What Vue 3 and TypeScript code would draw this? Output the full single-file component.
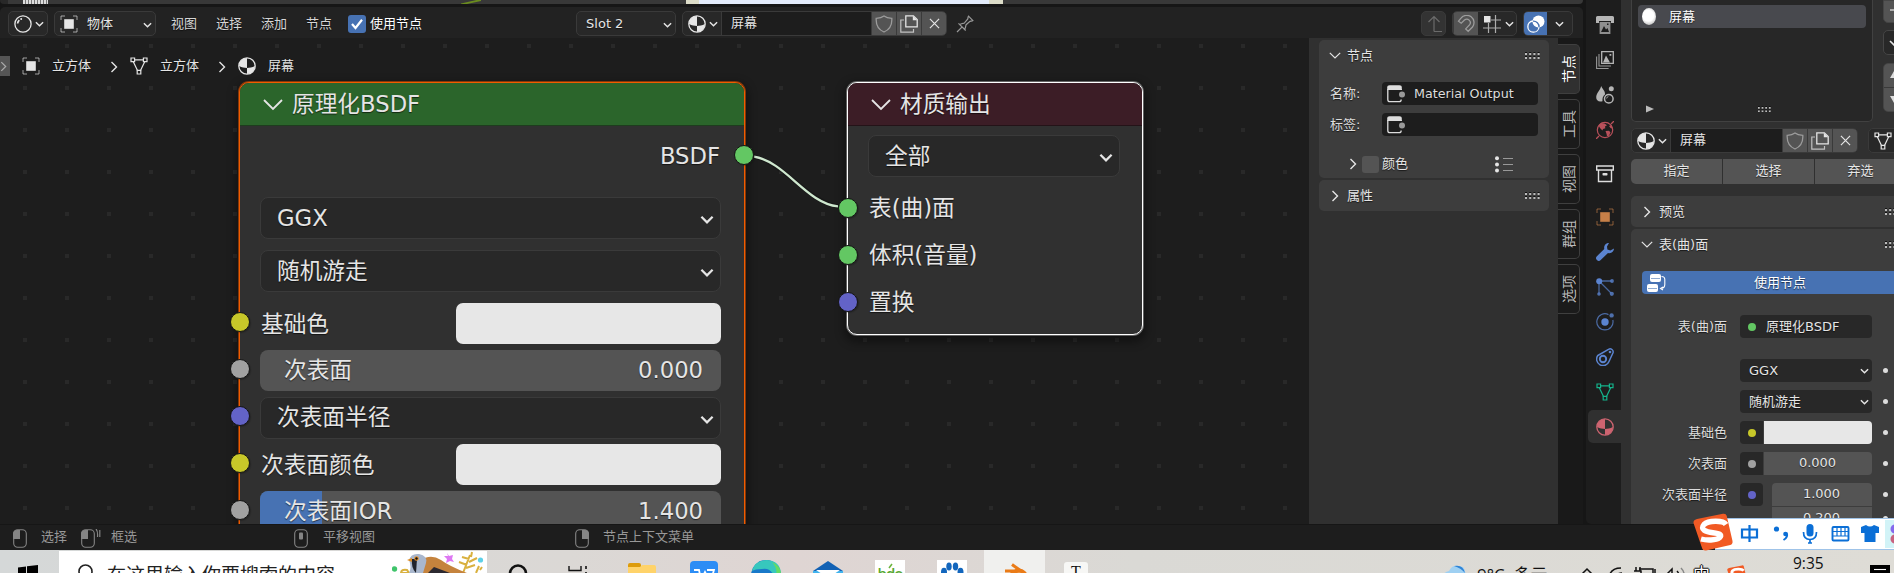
<script setup lang="ts">
interface Socket {
  kind: 'color' | 'value' | 'menu'
  label: string
  value?: string
  socket: string
  fill?: number
}

const menus: string[] = ['视图', '选择', '添加', '节点']
const sideTabs: string[] = ['节点', '工具', '视图', '群组', '选项']

const inputs: Socket[] = [
  { kind: 'color', label: '基础色', socket: 'yellow' },
  { kind: 'value', label: '次表面', value: '0.000', socket: 'gray', fill: 0 },
  { kind: 'menu', label: '次表面半径', socket: 'violet' },
  { kind: 'color', label: '次表面颜色', socket: 'yellow' },
  { kind: 'value', label: '次表面IOR', value: '1.400', socket: 'gray', fill: 13.5 },
]

const outputs = [
  { label: '表(曲)面', socket: 'green' },
  { label: '体积(音量)', socket: 'green' },
  { label: '置换', socket: 'violet' },
]

const navTop = [
  { icon: 'i-printer', tone: 'light' },
  { icon: 'i-images', tone: 'light' },
  { icon: 'i-scene', tone: 'light' },
  { icon: 'i-world', tone: 'red' },
]
const navBottom = [
  { icon: 'i-object', tone: 'orange' },
  { icon: 'i-wrench', tone: 'blue' },
  { icon: 'i-particles', tone: 'blue' },
  { icon: 'i-physics', tone: 'blue' },
  { icon: 'i-constraint', tone: 'blue' },
  { icon: 'i-mesh', tone: 'teal' },
]
</script>

<template>
  <div class="screen">
    <svg class="defs" width="0" height="0">
      <symbol id="i-chev" viewBox="0 0 10 6"><path d="M1 1l4 4 4-4" fill="none" stroke="currentColor" stroke-width="1.6" /></symbol>
      <symbol id="i-chevbig" viewBox="0 0 20 12"><path d="M1 1l9 9 9-9" fill="none" stroke="currentColor" stroke-width="1.8" /></symbol>
      <symbol id="i-right" viewBox="0 0 8 12"><path d="M1.5 1l5 5-5 5" fill="none" stroke="currentColor" stroke-width="1.4" /></symbol>
      <symbol id="i-object" viewBox="0 0 18 18">
        <path d="M1 5V1h4M13 1h4v4M17 13v4h-4M5 17H1v-4" fill="none" stroke="currentColor" stroke-width="1" opacity=".65" />
        <rect x="4.2" y="4.2" width="9.6" height="9.6" fill="currentColor" />
      </symbol>
      <symbol id="i-mesh" viewBox="0 0 18 18">
        <path d="M4.5 2.8h9M3.3 4.8l4.2 8.6M14.7 4.8l-4.2 8.6" fill="none" stroke="currentColor" stroke-width="1.2" />
        <path d="M1 1h3.6v3.6H1zM13.4 1H17v3.6h-3.6zM7.2 13.4h3.6V17H7.2z" fill="none" stroke="currentColor" stroke-width="1.2" />
      </symbol>
      <symbol id="i-material" viewBox="0 0 18 18">
        <circle cx="9" cy="9" r="8.2" fill="none" stroke="currentColor" stroke-width="1.3" />
        <path d="M9 1A8 8 0 0 0 1 9c3 1.4 5.4 1.9 8 1.9zM9 10.9V17a8 8 0 0 0 8-8c-3 1.4-5.4 1.9-8 1.9z" fill="currentColor" />
      </symbol>
      <symbol id="i-shader" viewBox="0 0 18 18">
        <circle cx="9" cy="9" r="8.1" fill="none" stroke="currentColor" stroke-width="1.3" />
        <path d="M3.6 8.5a5.4 5.4 0 0 1 1.7-3.4" fill="none" stroke="currentColor" stroke-width="1.8" />
        <circle cx="7.2" cy="3.9" r="1" fill="currentColor" />
      </symbol>
      <symbol id="i-shield" viewBox="0 0 18 18"><path d="M9 1c2 1.7 4.4 2.3 7.8 2.4C17.2 10 14.6 14.6 9 17 3.400 14.600.8 10 1.2 3.400 4.600 3.300 7 2.700 9 1z" fill="none" stroke="currentColor" stroke-width="1.3" /></symbol>
      <symbol id="i-copy" viewBox="0 0 18 18">
        <path d="M4 5H.8v12.200H13.500V14" fill="none" stroke="currentColor" stroke-width="1.2" opacity=".75" />
        <path d="M5.800.8h7.600l3.800 3.800v7.200H5.800z" fill="none" stroke="currentColor" stroke-width="1.3" />
        <path d="M12.800.8v4.400h4.400z" fill="currentColor" />
      </symbol>
      <symbol id="i-x" viewBox="0 0 12 12"><path d="M1 1l10 10M11 1L1 11" stroke="currentColor" stroke-width="1.3" /></symbol>
      <symbol id="i-pin" viewBox="0 0 18 18"><path d="M1 17l5.200-5.200M2.500 8.300l7.200 7.200M4.300 9.200c1.800-1 3.300-.8 4.200-1.300L11.800 4c.2-1.200.1-2 .7-2.800l4.400 4.400c-.9.600-1.700.5-2.900.8l-3.900 3.300c-.5.900-.2 2.500-1.300 4.200" fill="none" stroke="currentColor" stroke-width="1.2" /></symbol>
      <symbol id="i-magnet" viewBox="0 0 18 18"><path d="M1.500 6.200l2.500-3A7.200 7.200 0 0 1 15.500 12l-4.300 4.300-2.500-2.400 4-4.200a3.500 3.500 0 0 0-5.200-4.600L4.200 8.200z" fill="none" stroke="currentColor" stroke-width="1.3" /></symbol>
      <symbol id="i-grid" viewBox="0 0 18 18">
        <path d="M12.500 0v18M5.500 8v10M0 13h18M8 5h10" stroke="currentColor" stroke-width="1.2" opacity=".7" />
        <rect x="1" y="1" width="6.500" height="6.500" fill="currentColor" />
      </symbol>
      <symbol id="i-overlay" viewBox="0 0 18 18">
        <path d="M6 6A5.600 5.600 0 1 0 12 12.200" fill="none" stroke="currentColor" stroke-width="1.3" />
        <circle cx="11.500" cy="6.500" r="6" fill="currentColor" />
        <path d="M6 6.100a5.600 5.600 0 0 1 6 6" fill="none" stroke="#4772b3" stroke-width="1.4" />
      </symbol>
      <symbol id="i-node" viewBox="0 0 18 18">
        <path d="M.8 4v10.500c0 1.500.7 2.200 2.200 2.200h9c1.500 0 2.200-.7 2.200-2.200M14.200 4v1" fill="none" stroke="currentColor" stroke-width="1.3" />
        <path d="M.2 5V2.600C.2 1 1 .2 2.600.2h9.800c1.600 0 2.400.8 2.400 2.400V5z" fill="currentColor" />
        <circle cx="15" cy="9.500" r="3" fill="#9a9a9a" />
      </symbol>
      <symbol id="i-grip" viewBox="0 0 15 8">
        <g fill="currentColor"><path d="M0 1h2v2H0zM4.200 1h2v2h-2zM8.400 1h2v2h-2zM12.600 1h2v2h-2zM0 5h2v2H0zM4.200 5h2v2h-2zM8.400 5h2v2h-2zM12.600 5h2v2h-2z" /></g>
        <g fill="#111"><path d="M0 0h2v1H0zM4.200 0h2v1h-2zM8.400 0h2v1h-2zM12.600 0h2v1h-2zM0 4h2v1H0zM4.200 4h2v1h-2zM8.400 4h2v1h-2zM12.600 4h2v1h-2z" /></g>
      </symbol>
      <symbol id="i-printer" viewBox="0 0 18 18">
        <path d="M1.500 0h15A1.500 1.500 0 0 1 18 1.500V7h-3V5H3v2H0V1.500A1.500 1.500 0 0 1 1.500 0z" fill="currentColor" />
        <rect x="3.600" y="6" width="10.800" height="12" fill="currentColor" opacity=".75" />
        <path d="M5 16l3-6 2 3.500 1.500-1.500L13 16zM11 7.500h1.500V9H11z" fill="#1d1d1d" />
      </symbol>
      <symbol id="i-images" viewBox="0 0 18 18">
        <path d="M5.700.7h11.600v11.600H5.700z" fill="none" stroke="currentColor" stroke-width="1.3" />
        <path d="M3 3v12h12M.6 5.500v12h12" fill="none" stroke="currentColor" stroke-width="1.1" opacity=".8" />
        <path d="M7 11.500l3-7 4 7zM13.500 3h1.800v1.800h-1.800z" fill="currentColor" />
      </symbol>
      <symbol id="i-scene" viewBox="0 0 18 18">
        <path d="M5.200 0c1 3 4.200 5 3.800 8.500C7 10 6.200 12 6.500 15.200 3 16.500 0 14.500.2 11 .6 6.500 4.200 4.500 5.200 0z" fill="currentColor" />
        <circle cx="12.800" cy="12.800" r="4.300" fill="none" stroke="currentColor" stroke-width="1.500" />
        <path d="M10.600 12.500q.2-1.700 1.800-2" fill="none" stroke="currentColor" stroke-width=".8" />
        <circle cx="15.300" cy="2.800" r="2.500" fill="currentColor" />
      </symbol>
      <symbol id="i-world" viewBox="0 0 18 18">
        <circle cx="9" cy="9" r="7.700" fill="none" stroke="currentColor" stroke-width="1.2" />
        <path d="M2.500 4.500L5 2l3.500.5L11 4.200 9 5.500l.3 1.700L7 8l-.5 1.500L4 7zM9.500 10l3.500-.3 1.500 1.800-1.500 3.300-2 .5-.5-2.500zM13 5l2.500-1 1 3.500-2-.5z" fill="currentColor" />
        <path d="M0 18l3-3M15 3l3-3" stroke="currentColor" stroke-width="1.300" />
      </symbol>
      <symbol id="i-archive" viewBox="0 0 18 18">
        <path d="M.7 1h16.600v4H.7zM2.500 5v11.500h13V5" fill="none" stroke="currentColor" stroke-width="1.4" />
        <rect x="6.500" y="8" width="5" height="2.500" rx=".8" fill="currentColor" />
      </symbol>
      <symbol id="i-wrench" viewBox="0 0 18 18"><path d="M13 0c-3.200 0-5.500 2.800-4.700 6L.9 13.200A2.600 2.600 0 0 0 4.700 17L12 10c3.200.9 6-1.300 6-4.400l-3.600 2-3-1.200L11 3.600z" fill="currentColor" /></symbol>
      <symbol id="i-particles" viewBox="0 0 18 18">
        <path d="M3 3h12.500M3 3v12.500M4 4l11 11" stroke="currentColor" stroke-width="1.3" opacity=".7" />
        <circle cx="3.200" cy="3.200" r="3" fill="currentColor" />
        <g fill="currentColor" opacity=".8"><circle cx="16" cy="3" r="1.900" /><circle cx="3" cy="16" r="1.800" /><circle cx="15.800" cy="15.800" r="2.100" /></g>
      </symbol>
      <symbol id="i-physics" viewBox="0 0 18 18">
        <path d="M12.500 1.600A8.100 8.100 0 1 0 16.800 7" fill="none" stroke="currentColor" stroke-width="1.2" opacity=".75" />
        <circle cx="9" cy="9" r="3.700" fill="currentColor" /><circle cx="15.600" cy="2.400" r="2.200" fill="currentColor" opacity=".8" />
      </symbol>
      <symbol id="i-constraint" viewBox="0 0 18 18">
        <path d="M1.800 7.500L12.500 1.400A3 3 0 0 1 17 4.800L13 13.500A6.400 6.400 0 1 1 1.800 7.500z" fill="none" stroke="currentColor" stroke-width="1.500" />
        <circle cx="7" cy="11" r="3.200" fill="none" stroke="currentColor" stroke-width="1.900" />
        <circle cx="14" cy="4" r="1.300" fill="currentColor" />
      </symbol>
      <symbol id="i-mouse" viewBox="0 0 14 19"><rect x=".7" y=".7" width="12.600" height="17.600" rx="4" fill="none" stroke="currentColor" stroke-width="1.1" /></symbol>
      <symbol id="i-sogou" viewBox="0 0 40 38">
        <path d="M4 6L30 .8q3-.5 3.700 2L39.500 28q.5 3-2.200 4L13 37.500q-3 .5-3.800-2L.5 10Q0 7 4 6z" fill="#f15a24" />
        <path d="M33 11.500c-3-4.500-18-4-22 0-4.500 5 2 7.500 9 8.200 7 .8 9.500 2.300 6.500 5-3.500 2.800-13 2.800-18.500 1.300" fill="none" stroke="#fff" stroke-width="5.400" />
      </symbol>
    </svg>

    <div class="workspace">
      <main class="editor">
        <div class="strip">
          <span class="strip-icon"></span>
          <svg class="strip-curve" width="20" height="4"><path d="M0 4.500Q10 2 20 0" fill="none" stroke="#6b8c1f" stroke-width="1.800" /></svg>
          <span class="strip-light"></span>
        </div>
        <header class="header">
          <div class="btn type"><svg width="18" height="18"><use href="#i-shader" /></svg><svg width="9" height="6"><use href="#i-chev" /></svg></div>
          <div class="btn mode"><svg width="18" height="18"><use href="#i-object" /></svg><span>物体</span><svg class="end" width="9" height="6"><use href="#i-chev" /></svg></div>
          <nav class="menus"><span v-for="m in menus" :key="m">{{ m }}</span></nav>
          <label class="check"><span class="box"><svg width="18" height="18" viewBox="0 0 18 18"><path d="M4 9l3.500 4L14 4.800" fill="none" stroke="#fff" stroke-width="2.200" /></svg></span>使用节点</label>
          <div class="btn slot"><span>Slot 2</span><svg class="end" width="9" height="6"><use href="#i-chev" /></svg></div>
          <div class="btn datablock">
            <div class="pick"><svg width="18" height="18"><use href="#i-material" /></svg><svg width="9" height="6"><use href="#i-chev" /></svg></div>
            <div class="name">屏幕</div>
            <div class="tool dim"><svg width="18" height="18"><use href="#i-shield" /></svg></div>
            <div class="tool"><svg width="18" height="18"><use href="#i-copy" /></svg></div>
            <div class="tool"><svg width="11" height="11"><use href="#i-x" /></svg></div>
          </div>
          <svg class="pin" width="18" height="18"><use href="#i-pin" /></svg>
          <div class="btn up"><svg width="18" height="18" viewBox="0 0 18 18"><path d="M8 16.500V1.500M2.500 7L8 1.500 13.500 7M8 16.500h8" fill="none" stroke="currentColor" stroke-width="1.2" /></svg></div>
          <div class="btn snap"><div class="tool dim"><svg width="18" height="18"><use href="#i-magnet" /></svg></div><div class="rest"><svg width="18" height="18"><use href="#i-grid" /></svg><svg width="9" height="6"><use href="#i-chev" /></svg></div></div>
          <div class="btn overlay"><div class="on"><svg width="18" height="18"><use href="#i-overlay" /></svg></div><div class="rest"><svg width="9" height="6"><use href="#i-chev" /></svg></div></div>
        </header>

        <div class="area">
          <section class="canvas">
            <div class="crumbs">
              <span class="tab-handle"><svg width="7" height="11"><use href="#i-right" /></svg></span>
              <svg class="c1" width="18" height="18"><use href="#i-object" /></svg><span>立方体</span>
              <svg class="sep" width="8" height="12"><use href="#i-right" /></svg>
              <svg class="c2" width="18" height="18"><use href="#i-mesh" /></svg><span>立方体</span>
              <svg class="sep" width="8" height="12"><use href="#i-right" /></svg>
              <svg class="c2" width="18" height="18"><use href="#i-material" /></svg><span>屏幕</span>
            </div>

            <svg class="wire" width="130" height="80" viewBox="740 145 130 80">
              <path d="M744 155.500C784 155.500 806 207.500 848 207.500" fill="none" stroke="#111" stroke-width="4" opacity=".5" />
              <path d="M754 156.600C786 162 806 203 838 206.400" fill="none" stroke="#cfe8cf" stroke-width="2.300" />
            </svg>

            <article class="node bsdf">
              <h2><svg width="20" height="12"><use href="#i-chevbig" /></svg>原理化BSDF</h2>
              <div class="row out">BSDF<i class="socket green right"></i></div>
              <div class="field gap">GGX<svg width="14" height="9"><use href="#i-chev" /></svg></div>
              <div class="field gap2">随机游走<svg width="14" height="9"><use href="#i-chev" /></svg></div>
              <div v-for="s in inputs" :key="s.label" class="row">
                <i class="socket left" :class="s.socket"></i>
                <template v-if="s.kind === 'color'"><span class="lbl">{{ s.label }}</span><span class="swatch"></span></template>
                <div v-else-if="s.kind === 'menu'" class="field">{{ s.label }}<svg width="14" height="9"><use href="#i-chev" /></svg></div>
                <div v-else class="slider"><b :style="{ width: s.fill + '%' }"></b><span>{{ s.label }}</span><span>{{ s.value }}</span></div>
              </div>
            </article>

            <article class="node output">
              <h2><svg width="20" height="12"><use href="#i-chevbig" /></svg>材质输出</h2>
              <div class="field first">全部<svg width="14" height="9"><use href="#i-chev" /></svg></div>
              <div v-for="o in outputs" :key="o.label" class="row"><i class="socket left" :class="o.socket"></i><span class="lbl">{{ o.label }}</span></div>
            </article>
          </section>

          <aside class="sidebar">
            <section class="panel open">
              <div class="phead"><svg width="12" height="7" viewBox="0 0 12 7"><path d="M.8.8L6 6 11.200.8" fill="none" stroke="currentColor" stroke-width="1.2" /></svg><span>节点</span><svg class="grip" width="15" height="8"><use href="#i-grip" /></svg></div>
              <div class="prow n1"><span>名称:</span><div class="input"><svg width="18" height="18"><use href="#i-node" /></svg><em>Material Output</em></div></div>
              <div class="prow n2"><span>标签:</span><div class="input"><svg width="18" height="18"><use href="#i-node" /></svg></div></div>
              <div class="color-row">
                <svg width="8" height="12"><use href="#i-right" /></svg><i></i><span>颜色</span>
                <svg class="list" width="18" height="17" viewBox="0 0 18 17"><g fill="currentColor"><circle cx="2" cy="2.300" r="2" /><circle cx="2" cy="8.500" r="2" /><circle cx="2" cy="14.500" r="2" /></g><path d="M8 2.500h10M8 8.500h10M8 14.500h10" stroke="#999" stroke-width="1.1" /></svg>
              </div>
            </section>
            <section class="panel closed">
              <div class="phead"><svg class="rt" width="8" height="12"><use href="#i-right" /></svg><span>属性</span><svg class="grip" width="15" height="8"><use href="#i-grip" /></svg></div>
            </section>
          </aside>
          <div class="tabs"><div v-for="(t, i) in sideTabs" :key="t" class="tab" :class="{ active: i === 0 }"><span>{{ t }}</span></div></div>
        </div>
      </main>

      <nav class="nav">
        <div v-for="n in navTop" :key="n.icon" class="cell" :class="n.tone"><svg width="18" height="18"><use :href="'#' + n.icon" /></svg></div>
        <div class="cell arch"><svg width="18" height="18"><use href="#i-archive" /></svg></div>
        <div v-for="n in navBottom" :key="n.icon" class="cell" :class="n.tone"><svg width="18" height="18"><use :href="'#' + n.icon" /></svg></div>
        <div class="cell pink current"><svg width="18" height="18"><use href="#i-material" /></svg></div>
      </nav>

      <aside class="props">
        <div class="slots">
          <div class="slotlist">
            <div class="slotitem"><i class="ball"></i>屏幕</div>
            <div class="slotfoot"><svg width="8" height="8" viewBox="0 0 8 8"><path d="M0 .5l8 3.500-8 3.500z" fill="#bbb" /></svg><svg class="grip" width="13" height="7"><use href="#i-grip" /></svg></div>
          </div>
          <div class="slotbtns">
            <div class="sb plus"><svg width="11" height="12" viewBox="0 0 11 12"><path d="M0 4h11" stroke="#ddd" stroke-width="1.3" /></svg></div>
            <div class="sb menu"><svg width="10" height="6"><use href="#i-chev" /></svg></div>
            <div class="sb arrows"><svg width="8" height="34" viewBox="0 0 8 34"><path d="M0 7l4-7 4 7zM0 25l4 7 4-7z" fill="#ddd" /></svg></div>
          </div>
        </div>
        <div class="matrow">
          <div class="btn datablock">
            <div class="pick"><svg width="18" height="18"><use href="#i-material" /></svg><svg width="9" height="6"><use href="#i-chev" /></svg></div>
            <div class="name">屏幕</div>
            <div class="tool dim"><svg width="18" height="18"><use href="#i-shield" /></svg></div>
            <div class="tool"><svg width="18" height="18"><use href="#i-copy" /></svg></div>
            <div class="tool"><svg width="11" height="11"><use href="#i-x" /></svg></div>
          </div>
          <div class="btn link"><svg width="18" height="18"><use href="#i-mesh" /></svg></div>
        </div>
        <div class="assign"><span>指定</span><span>选择</span><span>弃选</span></div>
        <section class="ppanel small"><div class="phead"><svg class="rt" width="8" height="12"><use href="#i-right" /></svg><span>预览</span><svg class="grip" width="15" height="8"><use href="#i-grip" /></svg></div></section>
        <section class="ppanel big">
          <div class="phead"><svg width="12" height="7" viewBox="0 0 12 7"><path d="M.8.8L6 6 11.200.8" fill="none" stroke="currentColor" stroke-width="1.2" /></svg><span>表(曲)面</span><svg class="grip" width="15" height="8"><use href="#i-grip" /></svg></div>
          <div class="usenodes">
            <svg width="19" height="18" viewBox="0 0 19 18"><rect x="3" y="0" width="11" height="8" rx="2" fill="#fff" /><rect x="0" y="10" width="11" height="8" rx="2" fill="#fff" /><path d="M4 4.500h9M1 14.500h9" stroke="#4772b3" stroke-width="1" opacity=".6" /><path d="M14.500 2.500c3 0 3.300 1.500 3.300 3v5c0 2.500-1 4-4.500 4M16 13l-2.500 1.500L16 16" fill="none" stroke="#fff" stroke-width="1.1" /></svg>
            <span>使用节点</span>
          </div>
          <div class="line l1"><label>表(曲)面</label><div class="dark wide"><i class="dot green"></i>原理化BSDF</div></div>
          <div class="line l2"><label></label><div class="dark wide drop">GGX<svg width="9" height="6"><use href="#i-chev" /></svg></div><u></u></div>
          <div class="line"><label></label><div class="dark wide drop">随机游走<svg width="9" height="6"><use href="#i-chev" /></svg></div><u></u></div>
          <div class="line"><label>基础色</label><div class="dark cap"><i class="dot yellow"></i></div><div class="val white"></div><u></u></div>
          <div class="line"><label>次表面</label><div class="dark cap"><i class="dot gray"></i></div><div class="val">0.000</div><u></u></div>
          <div class="line"><label>次表面半径</label><div class="dark sq"><i class="dot violet"></i></div><div class="val multi">1.000</div><u></u></div>
          <div class="line last"><label></label><div class="dark sq hid"></div><div class="val multi mid">0.200</div><u></u></div>
        </section>
      </aside>
    </div>

    <footer class="status">
      <div class="hint h1"><svg width="14" height="19"><use href="#i-mouse" /><path d="M0 10V5q0-4 4-4h3v9z" fill="currentColor" /></svg><span>选择</span></div>
      <div class="hint h2"><svg width="20" height="19" viewBox="0 0 20 19"><use href="#i-mouse" width="14" height="19" /><path d="M0 10V5q0-4 4-4h3v9z" fill="currentColor" /><path d="M15 0q2 2 1.500 8M18.800 1v7" fill="none" stroke="currentColor" stroke-width="1.2" /></svg><span>框选</span></div>
      <div class="hint h3"><svg width="14" height="19"><use href="#i-mouse" /><rect x="5" y="3.500" width="4" height="7" rx="1" fill="currentColor" /></svg><span>平移视图</span></div>
      <div class="hint h4"><svg width="14" height="19"><use href="#i-mouse" /><path d="M14 10V5q0-4-4-4H7v9z" fill="currentColor" /></svg><span>节点上下文菜单</span></div>
    </footer>

    <footer class="taskbar">
      <svg class="win" width="20" height="20" viewBox="0 0 20 20"><path d="M0 2.600L8 1.400V20H0zM9 1.300L20 0v20H9z" fill="#000" /></svg>
      <div class="search">
        <svg class="lens" width="16" height="18" viewBox="0 0 16 18"><circle cx="7.500" cy="7.500" r="6.500" fill="none" stroke="#222" stroke-width="1.6" /></svg>
        <span>在这里输入你要搜索的内容</span>
        <svg class="bird" width="94" height="22" viewBox="0 0 94 22">
          <circle cx="2.500" cy="18" r="2.700" fill="#3fc46b" />
          <path d="M9 22q0-4 6-3l2 3zM71 22l7-18M77 8l-7-2M79 6l1-5M77 11l8-4M75 14l-8-3M74 17l9-3M84 22l3-7M88 19l2-3" stroke="#d9b13f" stroke-width="2" fill="none" />
          <path d="M28 10Q38 2 49 9q8 6 26 13H22q-2-8 6-12z" fill="#c5833d" />
          <path d="M17 9q2-7 10-6 9 2 7 9l-3 10H17q3-6 0-13z" fill="#a9b7cd" />
          <path d="M36 22l6-6 16 6z" fill="#2c2930" /><path d="M20 8h5l-1 14q-5-5-4-14z" fill="#20232c" /><path d="M20 7l-5 2 5 2z" fill="#dc8b24" /><circle cx="24.500" cy="7.500" r="2.300" fill="#e89129" /><circle cx="24.500" cy="7.500" r="1.200" fill="#111" />
          <path d="M55 2l2 3 4-1-1 4 2 3-4-1-4 2 1-4-3-3 4 0z" fill="#dd77f2" /><circle cx="88.500" cy="9" r="2.600" fill="#5dd0e8" />
        </svg>
      </div>
      <div class="app cortana"><svg width="20" height="22" viewBox="0 0 20 22"><circle cx="10" cy="10.500" r="8" fill="none" stroke="#111" stroke-width="2.600" /></svg></div>
      <div class="app view"><svg width="20" height="22" viewBox="0 0 20 22"><path d="M1 3v4.500h12V3M1 22v-9h12v9" fill="none" stroke="#111" stroke-width="1.4" /><path d="M18 3v3M18 9v11" stroke="#111" stroke-width="1.6" /></svg></div>
      <div class="app folder"><svg width="28" height="22" viewBox="0 0 28 22"><path d="M0 2q0-2 2-2h9q2 0 2 2v6H0z" fill="#dd9c0c" /><path d="M0 4h12l2-2h12q2 0 2 2v18H0z" fill="#ffd36a" /></svg></div>
      <div class="app wps"><svg width="28" height="24" viewBox="0 0 28 24"><rect width="28" height="28" rx="4" fill="#2c8df5" /><path d="M4 9h5l2 10 4-8 4 8 2-6h-4M17 9h7l-3 10" fill="none" stroke="#fff" stroke-width="1.800" /></svg></div>
      <div class="app edge"><svg width="30" height="24" viewBox="0 0 30 24"><circle cx="15" cy="15" r="15" fill="#1979c9" /><path d="M1 11Q4 0 16 0q14 1 14 15l-6 3q-4-11-13-9-7 0-10 2z" fill="#37c7bd" /><path d="M21 2q9 4 9 13l-5 3q2-10-4-16z" fill="#65dc63" /><path d="M12 22q0-9 8-8 4 3 3 8z" fill="#e7f6ff" /></svg></div>
      <div class="app mail"><svg width="30" height="24" viewBox="0 0 30 24"><path d="M0 11L15 1l15 10z" fill="#1261b4" /><path d="M0 11h30v13H0z" fill="#40b3ee" /><path d="M3 10h24l-12 8z" fill="#fff" /></svg></div>
      <div class="app bdo"><span>bdo</span><svg width="30" height="6" viewBox="0 0 30 6"><path d="M14 5l3-4" stroke="#6ab43e" stroke-width="1.500" /></svg></div>
      <div class="app paw"><svg width="30" height="24" viewBox="0 0 30 24"><path fill="#fff" d="M0 0h30v24H0z" /><g fill="#1266bd"><ellipse cx="7" cy="12" rx="3" ry="4.300" /><ellipse cx="12" cy="6.500" rx="2.700" ry="4" /><ellipse cx="18.500" cy="6.500" rx="2.700" ry="4" /><ellipse cx="23.500" cy="12" rx="3" ry="4.300" /><path d="M9 24q2-9 6.500-9T22 24z" /></g></svg></div>
      <div class="app blender"><svg width="25" height="22" viewBox="0 0 25 22"><path d="M9 1.500l14 10M2 8h15M1 16L14 7" stroke="#ea7b17" stroke-width="3" /><circle cx="16" cy="14.500" r="7" fill="none" stroke="#ea7b17" stroke-width="4" /></svg></div>
      <div class="app typora"><span>T</span></div>
      <div class="tray">
        <svg class="cloud" width="24" height="18" viewBox="0 0 24 18"><path d="M1 12Q0 7 6 6 9 0 15 1q7 0 7 6 2 2 2 7v4H1z" fill="#9fd0f2" /><path d="M11 1q9-2 11 7-4-5-11-7z" fill="#2e83d6" /><path d="M2 18Q1 8 9 8q7 0 8 10z" fill="#e9f5fd" /></svg>
        <span class="temp">9°C&nbsp; 多云</span>
        <svg class="ticons" width="120" height="20" viewBox="0 0 120 20">
          <g fill="none" stroke="#111" stroke-width="1.500">
            <path d="M0 15l6-6 6 6" /><path d="M28 18q1-10 12-10M34 19q1-6 7-6" /><path d="M58 9h14v10M55 7v4M59 7v4M53 11h7v6M74 9v9" /><path d="M82 14h4l5-5v10M96 11q3 3 1 8" /><path d="M100 8q5 5 2 11" stroke="#888" />
          </g>
        </svg>
        <span class="ime">中</span>
        <svg class="s2" width="20" height="19"><use href="#i-sogou" /></svg>
        <span class="clock">9:35</span>
        <svg class="notif" width="20" height="10" viewBox="0 0 20 10"><path d="M0 0h20v10H0z" /><path d="M4 4.500h12" stroke="#fff" stroke-width="1.1" /></svg>
      </div>
    </footer>

    <div class="imebar">
      <svg class="logo" width="40" height="38"><use href="#i-sogou" /></svg>
      <svg width="160" height="30" viewBox="0 0 160 30">
        <g fill="none" stroke="#0b6fd6" stroke-width="2.200"><path d="M3 10.500h15v8H3zM10.500 6v17" /></g>
        <circle cx="37.500" cy="10" r="2.600" fill="#0b6fd6" /><circle cx="46.500" cy="15" r="2.300" fill="#0b6fd6" /><path d="M47.500 14q2 4-3 7" fill="none" stroke="#0b6fd6" stroke-width="2" />
        <rect x="67.500" y="5" width="7" height="12.500" rx="3.500" fill="#0b6fd6" /><path d="M64.500 13q0 7.500 6.500 7.500t6.500-7.500M71 20v4M69 24h4" fill="none" stroke="#0b6fd6" stroke-width="1.700" />
        <rect x="93.500" y="8" width="16" height="13.500" rx="1" fill="none" stroke="#0b6fd6" stroke-width="1.900" /><path d="M94 12.500h15M94 17h15M98 8v9M102 8v9M106 8v9" stroke="#0b6fd6" stroke-width="1.2" />
        <path d="M122 8l5-2q4 3 8 0l5 2v6h-3.500v9h-11v-9H122z" fill="#0b6fd6" />
        <path d="M146 1h14v28h-14z" fill="#d2f3f7" /><circle cx="156" cy="10" r="4.500" fill="#8468ec" /><circle cx="156" cy="20" r="4.500" fill="#c8627f" />
      </svg>
    </div>
  </div>
</template>

<style>
body { margin: 0; overflow: hidden; }
</style>

<style scoped>
.screen { position: relative; width: 1894px; height: 573px; overflow: hidden; background: #161616; color: #e5e5e5; font: 13px/16px "DejaVu Sans", "Noto Sans CJK SC", sans-serif; white-space: nowrap; }
.screen * { box-sizing: border-box; }
.defs { position: absolute; }
svg { display: block; flex: none; }
i, em { font-style: normal; }
u { text-decoration: none; }
.workspace { display: flex; height: 525px; }
.editor { width: 1583px; display: flex; flex-direction: column; text-shadow: 0 1px 1px #0009; }

.strip { height: 4px; margin-bottom: 3px; display: flex; background: #383838; border-radius: 0 0 5px 5px; border-left: 8px solid #282828; }
.strip-icon { width: 25px; height: 4px; margin-left: 15px; background: repeating-linear-gradient(90deg, #ddd 0 2px, #777 2px 3px); }
.strip-curve { margin-left: 413px; }
.strip-light { width: 317px; margin-left: 205px; background: #e3ecfb; border: solid #dcdcc8; border-width: 0 14px 0 13px; }

.header { height: 31px; background: #222; border-radius: 5px 5px 0 0; display: flex; align-items: center; padding: 2px 0 0 8px; }
.btn { flex: none; height: 25px; border: 1px solid #3a3a3a; border-radius: 5px; background: #282828; display: flex; align-items: center; }
.type { width: 40px; padding-left: 5px; gap: 3px; }
.mode { width: 102px; margin-left: 6px; padding: 0 3px 0 5px; gap: 9px; }
.end { margin-left: auto; margin-top: 2px; }
.menus { display: flex; gap: 19px; margin-left: 15px; color: #d5d5d5; }
.check { display: flex; flex: none; align-items: center; margin-left: 16px; gap: 4px; width: 228px; color: #fff; }
.box { width: 18px; height: 18px; background: #4772b3; border-radius: 3px; }
.slot { width: 100px; padding: 0 3px 0 9px; }
.datablock { width: 265px; margin-left: 6px; overflow: hidden; }
.pick { width: 38px; height: 100%; display: flex; align-items: center; gap: 3px; padding-left: 5px; }
.name { flex: 1; height: 100%; background: #1d1d1d; border-left: 1px solid #3a3a3a; padding: 3px 9px; }
.tool { width: 25px; height: 100%; background: #545454; border-left: 1px solid #3a3a3a; display: flex; align-items: center; justify-content: center; }
.dim { color: #9c9c9c; }
.pin { margin-left: 9px; color: #999; }
.up { width: 25px; margin-left: 447px; padding-left: 4px; background: #333; color: #6b6b6b; }
.snap { width: 65px; margin-left: 6px; overflow: hidden; }
.overlay { width: 50px; margin-left: 6px; overflow: hidden; }
.rest { display: flex; align-items: center; padding-left: 5px; gap: 4px; }
.overlay .rest { padding-left: 8px; }
.on { width: 23px; height: 100%; background: #4772b3; color: #fff; display: flex; align-items: center; justify-content: center; }

.area { flex: 1; display: flex; height: 486px; max-height: 486px; }
.canvas { position: relative; width: 1309px; overflow: hidden; background: #1d1d1d; }
.canvas::before { content: ""; position: absolute; inset: 6px 0 0 23px; background-image: conic-gradient(from 0deg at 4px 4px, #0000 0 270deg, #292929 270deg 360deg); background-size: 42px 42px; }
.crumbs { position: relative; display: flex; align-items: center; height: 20px; margin-top: 18px; }
.tab-handle { width: 10px; height: 20px; background: #555; display: flex; align-items: center; color: #aaa; }
.c1 { margin: 0 12px 0 12px; }
.sep { margin: 2px 12px 0 19px; }
.c2 { margin: 0 12px 0 0; }
.wire { position: absolute; left: 740px; top: 107px; }
.node { position: absolute; top: 44px; border-radius: 10px; background: #303030; border: 1px solid; font-size: 22.7px; line-height: 30px; }
.bsdf { left: 239px; width: 506px; height: 520px; border-color: #f05c00; box-shadow: 0 0 0 1px #d04f0099, 0 4px 10px 3px #0006; padding: 0 23px 0 20px; }
.output { left: 847px; width: 296px; height: 253px; border-color: #fff; box-shadow: 0 0 0 1px #ffffff55, 0 4px 10px 3px #0006; padding: 0 22px 0 20px; }
h2 { margin: 0 -23px 0 -20px; height: 43px; padding-left: 23px; display: flex; align-items: center; gap: 9px; font-size: inherit; font-weight: normal; border-radius: 9px 9px 0 0; }
h2 svg { margin-top: 1px; }
.bsdf h2 { background: #2b652b; border-bottom: 1px solid #1e3d1e; }
.output h2 { background: #3c1d26; border-bottom: 1px solid #241318; margin-right: -22px; }
.row { position: relative; height: 47px; display: flex; align-items: center; }
.out { margin-top: 6px; justify-content: flex-end; padding-right: 1px; }
.field { width: 100%; height: 42px; border: 1px solid #3a3a3a; border-radius: 8px; background: #282828; display: flex; align-items: center; justify-content: space-between; padding: 0 6px 1px 16px; }
.field svg { margin-top: 4px; }
.gap { margin-top: 18px; }
.gap2 { margin: 11px 0 8px; }
.first { margin: 9px 0 7px; }
.lbl { flex: 1; padding-left: 1px; }
.swatch { width: 265px; height: 41px; background: #e7e7e7; border-radius: 7px; }
.slider { position: relative; width: 100%; height: 41px; border-radius: 8px; background: #545454; overflow: hidden; display: flex; align-items: center; justify-content: space-between; padding: 0 18px 1px 24px; }
.slider span { position: relative; }
.slider b { position: absolute; inset: 0 auto 0 0; background: #4772b3; }
.socket { position: absolute; top: 12px; width: 20px; height: 20px; border-radius: 50%; border: 1px solid #151515; box-shadow: 1px 1px 1px #1115; }
.left { left: -30px; }
.output .left { top: 14px; }
.right { top: 13px; right: -33px; }
.green { background: #63c763; }
.yellow { background: #c7c729; }
.gray { background: #a1a1a1; }
.violet { background: #6363c7; }

.sidebar { width: 249px; background: #303030; padding: 2px 9px 0 10px; }
.panel { background: #3d3d3d; border-radius: 5px; }
.open { height: 138px; }
.closed { height: 31px; margin-top: 2px; }
.phead { height: 31px; display: flex; align-items: center; padding: 0 9px 0 10px; }
.phead span { margin-left: 6px; }
.phead .rt { margin: 0 2px; }
.grip { margin-left: auto; color: #bbb; }
.prow { display: flex; align-items: center; height: 23px; padding: 0 11px; color: #ddd; }
.prow span { width: 52px; }
.n1 { margin-top: 11px; }
.n2 { margin-top: 8px; }
.input { width: 156px; height: 23px; background: #1d1d1d; border-radius: 4px; display: flex; align-items: center; padding-left: 5px; gap: 9px; font-size: 12.7px; }
.color-row { display: flex; align-items: center; height: 20px; margin-top: 18px; padding-left: 30px; }
.color-row i { width: 17px; height: 17px; background: #545454; border-radius: 3px; margin: 1px 3px 0 5px; }
.list { margin-left: 87px; }
.tabs { width: 25px; background: #191919; padding-top: 6px; display: flex; flex-direction: column; gap: 5px; }
.tab { width: 22px; height: 50px; border: 1px solid #3f3f3f; border-left: 0; border-radius: 0 5px 5px 0; background: #1b1b1b; display: flex; align-items: center; justify-content: center; color: #bbb; }
.tab span { writing-mode: vertical-rl; text-orientation: sideways; transform: rotate(180deg); font-size: 14px; line-height: 16px; }
.active { background: #303030; color: #fff; }

.nav { width: 35px; margin-left: 3px; background: #1d1d1d; border-radius: 0 0 0 5px; padding-top: 7px; height: 524px; }
.cell { height: 35px; display: flex; align-items: center; padding-left: 10px; }
.light { color: #b5b5b5; }
.red { color: #b8505a; }
.arch { margin: 9px 0 8px; color: #ddd; }
.orange { color: #c57f48; }
.blue { color: #5b84d0; }
.teal { color: #15b48c; }
.pink { color: #cd6470; }
.current { background: #303030; border-radius: 5px 0 0 5px; margin-left: 2px; padding-left: 8px; height: 33px; margin-top: 1px; }

.props { width: 273px; height: 524px; background: #303030; padding-left: 10px; overflow: hidden; text-shadow: 0 1px 1px #0009; }
.slots { display: flex; height: 122px; }
.slotlist { flex: none; width: 242px; height: 122px; background: #272727; border: 1px solid #414141; border-top: 0; border-radius: 0 0 5px 5px; padding: 5px 6px 0; }
.slotitem { height: 23px; border-radius: 4px; background: #48494e; display: flex; align-items: center; gap: 13px; padding-left: 4px; color: #fff; }
.ball { width: 14px; height: 17px; border-radius: 50%; background: radial-gradient(circle at 45% 45%, #fff 45%, #999); }
.slotfoot { display: flex; margin-top: 77px; padding-left: 8px; align-items: center; }
.slotfoot .grip { margin-left: 104px; }
.slotbtns { flex: none; margin-left: 10px; }
.sb { width: 30px; display: flex; justify-content: flex-start; padding-left: 6px; align-items: center; border-radius: 5px; border: 1px solid #454545; background: #545454; }
.plus { height: 23px; border-top-left-radius: 0; }
.menu { height: 25px; margin-top: 7px; background: #282828; padding-left: 5px; }
.arrows { height: 49px; margin-top: 8px; padding-left: 6px; background: linear-gradient(#545454 23px, #3a3a3a 23px 24px, #545454 24px); }
.matrow { display: flex; margin-top: 6px; }
.matrow .datablock { width: 227px; margin: 0; }
.link { margin-left: 10px; width: 40px; padding-left: 5px; }
.assign { display: flex; gap: 1px; margin-top: 6px; height: 25px; }
.assign span { width: 91px; background: #545454; text-align: center; padding-top: 4px; flex: none; }
.assign span:first-child { border-radius: 5px 0 0 5px; }
.ppanel { background: #3d3d3d; border-radius: 5px 0 0 5px; width: 280px; }
.small { height: 31px; margin-top: 12px; }
.big { height: 300px; margin-top: 2px; }
.ppanel .grip { margin-right: 2px; }
.usenodes { height: 23px; margin: 11px 0 0 11px; border-radius: 4px; background: #4772b3; display: flex; align-items: center; padding-left: 5px; color: #fff; }
.usenodes span { margin-left: 88px; }
.line { display: flex; height: 23px; margin-top: 8px; align-items: center; }
.l1, .l2 { margin-top: 21px; }
.line label { width: 96px; margin-right: 13px; text-align: right; color: #ddd; }
.dark { height: 23px; background: #282828; display: flex; align-items: center; border-radius: 4px; }
.wide { width: 132px; padding-left: 8px; gap: 10px; }
.drop { justify-content: space-between; padding: 0 3px 0 9px; }
.cap { width: 23px; border-radius: 4px 0 0 4px; margin-right: 1px; justify-content: center; }
.sq { width: 23px; margin-right: 9px; justify-content: center; }
.hid { visibility: hidden; }
.dot { width: 8px; height: 8px; border-radius: 50%; }
.val { width: 108px; height: 23px; background: #545454; border-radius: 0 4px 4px 0; text-align: center; line-height: 22px; padding-right: 1px; }
.white { background: #e7e7e7; }
.multi { width: 100px; border-radius: 4px 4px 0 0; }
.mid { border-radius: 0; }
.last { margin-top: 1px; }
.line u { width: 5px; height: 5px; border-radius: 50%; background: #ddd; margin-left: 11px; }

.status { height: 25px; background: #1d1d1d; display: flex; align-items: center; color: #989898; }
.hint { display: flex; align-items: center; gap: 14px; }
.hint span { margin-top: -1px; }
.hint svg { margin-top: 2px; color: #858585; }
.h1 { margin-left: 13px; }
.h2 { margin-left: 14px; gap: 10px; }
.h3 { margin-left: 157px; gap: 15px; }
.h4 { margin-left: 200px; }

.taskbar { height: 23px; overflow: hidden; background: linear-gradient(90deg, #d5d8d8, #dbd8d5 30%, #dfd5d3 42%, #dad9d5 60%, #dedcd6); color: #111; display: flex; align-items: flex-start; font-family: "Open Sans", "Noto Sans CJK SC", sans-serif; }
.win { margin: 15px 21px 0 18px; }
.search { flex: none; width: 428px; height: 30px; margin-top: 1px; background: #fff; display: flex; }
.lens { margin: 13px 0 0 19px; }
.search span { margin: 12px 0 0 13px; font-size: 19px; line-height: 24px; color: #222; width: 228px; }
.bird { margin-left: 57px; }
.app { flex: none; }
.cortana { margin: 5px 0 0 21px; }
.view { margin: 3px 0 0 40px; }
.folder { margin: 3px 0 0 40px; }
.wps { margin: 1px 0 0 34px; }
.edge { margin: 0 0 0 33px; }
.mail { margin: 0 0 0 32px; }
.bdo { position: relative; width: 30px; height: 24px; margin-left: 32px; background: #fff; color: #58a832; font: 600 15px/26px "Open Sans", sans-serif; text-align: center; letter-spacing: -1px; }
.bdo svg { position: absolute; left: 0; top: 3px; }
.paw { margin-left: 32px; }
.folder, .wps, .edge, .mail, .bdo, .paw { margin-top: 10px; }
.folder { margin-top: 13px; }
.wps { margin-top: 11px; }
.cortana, .view { margin-top: 5px; }
.cortana svg, .view svg { margin-top: 8px; }
.blender { width: 61px; height: 23px; margin-left: 17px; padding: 13px 0 0 19px; background: #f0f0ee; }
.typora { width: 24px; height: 24px; margin: 12px 0 0 19px; border-radius: 3px; background: #f7f7f5; font: 16px/20px "Liberation Serif", serif; text-align: center; }
.tray { display: flex; align-items: flex-start; margin-left: 355px; }
.cloud { margin-top: 15px; }
.temp { margin: 13px 0 0 10px; font-size: 17px; line-height: 24px; width: 76px; }
.ticons { margin: 10px 0 0 28px; }
.ime { margin: 14px 0 0 -8px; font-size: 17px; line-height: 20px; color: #fff; text-shadow: 1px 0 #000, -1px 0 #000, 0 1px #000, 0 -1px #000; }
.s2 { margin: 15px 0 0 17px; }
.clock { margin: 4px 0 0 46px; font-size: 15.5px; line-height: 18px; }
.notif { margin: 15px 0 0 46px; }

.imebar { position: absolute; left: 1715px; top: 518px; width: 179px; height: 32px; background: #fff; border: solid #9fc3e8; border-width: 1px 0; padding-left: 24px; }
.logo { position: absolute; left: -22px; top: -6px; }
</style>
